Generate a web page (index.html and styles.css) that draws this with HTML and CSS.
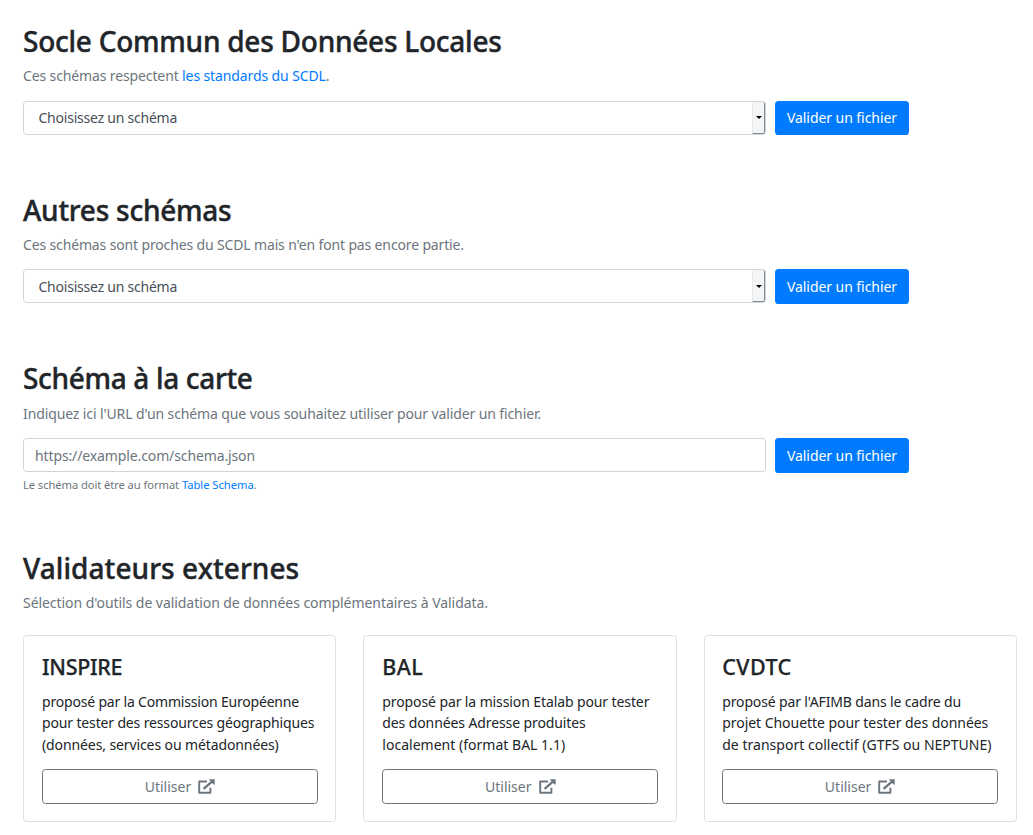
FILE: index.html
```
<!DOCTYPE html>
<html lang="fr">
<head>
<meta charset="utf-8">
<title>Validata</title>
<link rel="stylesheet" href="styles.css">
</head>
<body>
<svg width="0" height="0" class="defs">
  <symbol id="external" viewBox="0 0 17 15">
    <path d="M9 2.5H1.2V13.7H12.4V8.8" fill="none" stroke="currentColor" stroke-width="1.9" stroke-linejoin="round"/>
    <path d="M5.6 9.9 14.2 2.4" fill="none" stroke="currentColor" stroke-width="2.3"/>
    <path d="M10.8.2H16.7V6L14.6 4.6 12.3 2.1Z" fill="currentColor"/>
  </symbol>
</svg>
<main class="page">
  <section class="block">
    <h2 class="title title-scdl">Socle Commun des Données Locales</h2>
    <p class="lead">Ces schémas respectent <a href="#">les standards du SCDL</a>.</p>
    <div class="row">
      <div class="field select"><span class="value">Choisissez un schéma</span><span class="arrow"></span></div>
      <button class="btn">Valider un fichier</button>
    </div>
  </section>
  <section class="block">
    <h2 class="title title-other">Autres schémas</h2>
    <p class="lead lead-other">Ces schémas sont proches du SCDL mais n'en font pas encore partie.</p>
    <div class="row">
      <div class="field select"><span class="value">Choisissez un schéma</span><span class="arrow"></span></div>
      <button class="btn">Valider un fichier</button>
    </div>
  </section>
  <section class="block">
    <h2 class="title title-custom">Schéma à la carte</h2>
    <p class="lead lead-custom">Indiquez ici l'URL d'un schéma que vous souhaitez utiliser pour valider un fichier.</p>
    <div class="row">
      <input class="field input" type="text" placeholder="https://example.com/schema.json">
      <button class="btn">Valider un fichier</button>
    </div>
    <p class="hint">Le schéma doit être au format <a href="#">Table Schema</a>.</p>
  </section>
  <section class="block">
    <h2 class="title title-external">Validateurs externes</h2>
    <p class="lead lead-external">Sélection d'outils de validation de données complémentaires à Validata.</p>
    <div class="cards">
      <article class="card">
        <h3 class="name name-tight">INSPIRE</h3>
        <p class="text"><span class="tight">proposé par la Commission Européenne</span><br><span class="snug">pour tester des ressources géographiques</span><br><span class="close">(données, services ou métadonnées)</span></p>
        <a class="use" href="#">Utiliser <svg class="icon"><use href="#external"/></svg></a>
      </article>
      <article class="card">
        <h3 class="name">BAL</h3>
        <p class="text"><span class="close">proposé par la mission Etalab pour tester</span><br><span class="close">des données Adresse produites</span><br><span class="open">localement (format BAL 1.1)</span></p>
        <a class="use" href="#">Utiliser <svg class="icon"><use href="#external"/></svg></a>
      </article>
      <article class="card">
        <h3 class="name">CVDTC</h3>
        <p class="text"><span class="snug">proposé par l'AFIMB dans le cadre du</span><br><span class="near">projet Chouette pour tester des données</span><br><span class="open">de transport collectif (GTFS ou NEPTUNE)</span></p>
        <a class="use" href="#">Utiliser <svg class="icon"><use href="#external"/></svg></a>
      </article>
    </div>
  </section>
</main>
</body>
</html>
```
FILE: styles.css
```
* { box-sizing: border-box; }
body {
  margin: 0;
  background: #fff;
  color: #212529;
  font: 14px/21.6px "Noto Sans", "Open Sans", sans-serif;
}
a { color: #007bff; text-decoration: none; }
.defs { display: block; }
.page { padding: 24px 16px 13px 23px; }
.block { margin-bottom: 57.6px; }
.block:last-child { margin-bottom: 0; }

.title {
  margin: 0 0 7px;
  font-size: 28px;
  font-weight: 500;
  line-height: 34.1px;
  -webkit-text-stroke: .4px currentColor;
}
.title-scdl { letter-spacing: -.25px; }
.title-other { letter-spacing: -.26px; }
.title-custom { letter-spacing: -.33px; }
.title-external { letter-spacing: .07px; }

.lead { margin: 0 0 14.06px; color: #6c757d; letter-spacing: -.125px; }
.lead a { letter-spacing: -.11px; }
.lead-other { letter-spacing: -.143px; }
.lead-custom { letter-spacing: -.117px; }
.lead-external { margin-bottom: 21.46px; letter-spacing: -.055px; }

.row { display: flex; gap: 9px; height: 34.4px; }
.field {
  width: 743px;
  height: 34px;
  border: 1px solid #ced4da;
  border-radius: 3.6px;
  background: #fff;
  color: #495057;
}
.select { display: flex; justify-content: space-between; }
.value { padding: 5.4px 0 0 14.5px; letter-spacing: -.23px; }
.arrow {
  display: flex;
  align-items: center;
  justify-content: center;
  width: 13px;
  padding-top: 1px;
  background: #f4f5f6;
  border-right: 1px solid #868b90;
  border-bottom: 1px solid #868b90;
  border-left: 1px solid #e6e8ea;
  border-radius: 0 2px 2px 0;
}
.arrow::after {
  content: "";
  border: solid transparent;
  border-width: 3px 3px 0;
  border-top-color: #000;
}
.input { padding: 0 11px; font: inherit; letter-spacing: -.119px; }
.input::placeholder { color: #6c757d; opacity: 1; }
.btn {
  width: 134px;
  height: 34.4px;
  padding: 0;
  border: 0;
  border-radius: 3.6px;
  background: #007bff;
  color: #fff;
  font: inherit;
  letter-spacing: -.06px;
}
.hint {
  margin: 4.4px 0 -.8px;
  color: #6c757d;
  font-size: 11.2px;
  line-height: 16.8px;
  letter-spacing: -.075px;
}
.hint a { letter-spacing: -.02px; }

.cards { display: grid; grid-template-columns: repeat(3, 1fr); gap: 27px; }
.card {
  height: 187px;
  padding: 18px 17.5px 18px 18px;
  border: 1px solid #dfdfdf;
  border-radius: 3.6px;
}
.card:last-child { padding: 18px 18px 18px 17.6px; }
.name {
  margin: 0 0 11.3px;
  font-size: 21.5px;
  font-weight: 500;
  line-height: 26px;
  letter-spacing: .4px;
  -webkit-text-stroke: .25px currentColor;
}
.name-tight { letter-spacing: -.33px; }
.text { margin: 0 0 13.5px; line-height: 21.4px; white-space: nowrap; }
.tight { letter-spacing: -.189px; }
.snug { letter-spacing: -.148px; }
.close { letter-spacing: -.106px; }
.near { letter-spacing: -.048px; }
.open { letter-spacing: .015px; }
.use {
  display: flex;
  align-items: center;
  justify-content: center;
  gap: 7px;
  height: 35px;
  padding-top: 1px;
  border: 1px solid #6c757d;
  border-radius: 3.6px;
  color: #6c757d;
}
.icon { width: 17px; height: 15px; }
```
